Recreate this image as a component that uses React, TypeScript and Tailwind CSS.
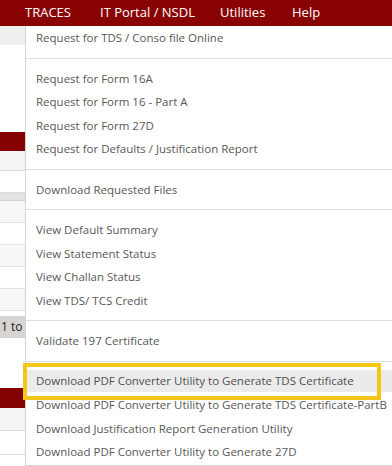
import React from 'react'

const groups: string[][] = [
  ['Request for TDS / Conso file Online'],
  [
    'Request for Form 16A',
    'Request for Form 16 - Part A',
    'Request for Form 27D',
    'Request for Defaults / Justification Report',
  ],
  ['Download Requested Files'],
  ['View Default Summary', 'View Statement Status', 'View Challan Status', 'View TDS/ TCS Credit'],
  ['Validate 197 Certificate'],
]

const downloads = [
  'Download PDF Converter Utility to Generate TDS Certificate-PartB',
  'Download Justification Report Generation Utility',
  'Download PDF Converter Utility to Generate 27D',
]

function Item({ label }: { label: string }) {
  return <div className="h-[23.5px] leading-[23.5px] pl-[10px] whitespace-nowrap">{label}</div>
}

export default function App() {
  return (
    <div
      className="relative w-[392px] h-[466px] overflow-hidden bg-white text-[11.5px]"
      style={{ fontFamily: '"Open Sans", "Noto Sans", sans-serif' }}
    >
      {/* top nav */}
      <div className="h-[26px] bg-[#8a0303] flex items-center text-white text-[13px] pl-[25px]">
        <span className="w-[75px]">TRACES</span>
        <span className="w-[120px]">IT Portal / NSDL</span>
        <span className="w-[72px]">Utilities</span>
        <span>Help</span>
      </div>

      {/* page behind the menu */}
      <div className="flex flex-col">
        <div className="h-[19px] bg-[#efefef]" />
        <div className="h-[87px]" />
        <div className="h-[19px] bg-[#850000]" />
        <div className="h-[20px] bg-[#f4f4f4] border-b border-[#dcdcdc]" />
        <div className="h-[22px] border-b border-[#dcdcdc]" />
        <div className="h-[8px] bg-[#e2e2e2] border-b border-[#d0d0d0]" />
        <div className="h-[22px] bg-[#f7f7f7] border-b border-[#e2e2e2]" />
        <div className="h-[22px] border-b border-[#e2e2e2]" />
        <div className="h-[22px] bg-[#f7f7f7] border-b border-[#e2e2e2]" />
        <div className="h-[22px] border-b border-[#e2e2e2]" />
        <div className="h-[22px] bg-[#f7f7f7] border-b border-[#e2e2e2]" />
        <div className="h-[5px]" />
        <div className="h-[22px] w-[80px] bg-[#d9d4d4] text-[#222] text-[12px] leading-[22px] pl-[1px]">1 to 5</div>
        <div className="h-[50px]" />
        <div className="h-[20px] bg-[#850000]" />
        <div className="h-[23px] bg-[#f4f4f4] border-b border-[#dcdcdc]" />
        <div className="h-[24px] border-b border-[#dcdcdc]" />
        <div className="flex h-[10px]">
          <div className="w-[130px] border-r border-[#dcdcdc]" />
          <div className="w-[92px] border-r border-[#dcdcdc]" />
          <div className="w-[70px] border-r border-[#dcdcdc]" />
          <div className="w-[70px] border-r border-[#dcdcdc]" />
        </div>
      </div>

      {/* dropdown menu */}
      <div className="absolute left-[25px] top-[26px] w-[380px] bg-white border-l border-b border-[#d4d4d4] text-[#585858] pb-[1px] shadow-[1px_1px_2px_rgba(0,0,0,0.08)]">
        {groups.map((g, i) => (
          <div key={i}>
            {g.map((l) => (
              <Item key={l} label={l} />
            ))}
            <div className="my-[8px] border-t border-[#dedede]" />
          </div>
        ))}
        <div className="relative">
          <div className="absolute -left-[3px] top-[-7px] w-[358px] h-[37px] border-[4px] border-[#f5c518]" />
          <div className="mx-[1px] bg-[#ebebeb] h-[22px] leading-[22px] pl-[9px] mb-[1.5px] whitespace-nowrap text-[#505050]">
            Download PDF Converter Utility to Generate TDS Certificate
          </div>
        </div>
        {downloads.map((l) => (
          <Item key={l} label={l} />
        ))}
      </div>
    </div>
  )
}
